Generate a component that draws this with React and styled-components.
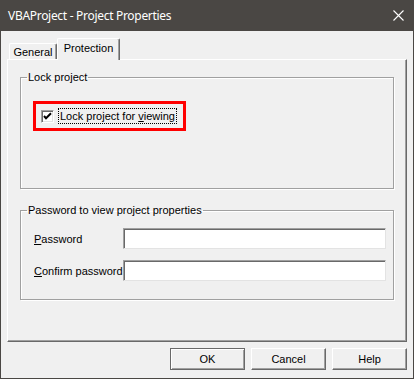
import React from 'react';
import styled, { createGlobalStyle } from 'styled-components';

const GlobalStyle = createGlobalStyle`
  html, body { margin: 0; padding: 0; background: #ffffff; }
  body { font-family: 'Liberation Sans', Arial, sans-serif; font-size: 11px; color: #000; }
  * { box-sizing: border-box; }
`;

const Window = styled.div`
  width: 414px;
  height: 379px;
  display: flex;
  flex-direction: column;
  background: #f0f0f0;
  border: 1px solid #4a4744;
  border-top: none;
`;

const TitleBar = styled.div`
  height: 31px;
  flex: none;
  display: flex;
  align-items: center;
  justify-content: space-between;
  padding: 0 9px 1px 7px;
  background: #4a4744;
  color: #ffffff;
  font-family: 'Noto Sans', 'Open Sans', sans-serif;
  font-size: 12px;
  letter-spacing: -0.3px;
`;

const CloseIcon = styled.svg`
  width: 11px;
  height: 11px;
  display: block;
`;

const Body = styled.div`
  flex: 1;
  display: flex;
  flex-direction: column;
  padding: 7px 6px 0 6px;
`;

const TabRow = styled.div`
  height: 22px;
  display: flex;
  align-items: flex-end;
  padding-left: 2px;
  margin-bottom: -1px;
  position: relative;
  z-index: 1;
`;

const Tab = styled.div`
  display: flex;
  align-items: center;
  justify-content: center;
  width: ${p => p.$width}px;
  height: ${p => (p.$active ? 22 : 16)}px;
  margin-bottom: ${p => (p.$active ? 0 : 1)}px;
  padding-bottom: ${p => (p.$active ? 3 : 0)}px;
  background: #f0f0f0;
  border-top: 1px solid #ffffff;
  border-left: 1px solid #ffffff;
  border-right: 1px solid #696969;
  border-radius: 2px 2px 0 0;
  box-shadow: inset -1px 0 0 #a0a0a0;
`;

const Panel = styled.div`
  height: 283px;
  flex: none;
  padding: 11px 12px 0 12px;
  border-top: 1px solid #ffffff;
  border-left: 1px solid #ffffff;
  border-right: 1px solid #696969;
  border-bottom: 1px solid #696969;
  box-shadow: inset -1px -1px 0 #a0a0a0;
`;

const Group = styled.fieldset`
  margin: ${p => p.$top}px 0 0 0;
  height: ${p => p.$height}px;
  padding: ${p => p.$padTop}px 6px 0 12px;
  min-inline-size: 0;
  border: 1px solid #a0a0a0;
  box-shadow: 1px 1px 0 #ffffff, inset 1px 1px 0 #ffffff;
`;

const Legend = styled.legend`
  margin-left: -6px;
  padding: 0 1px;
  line-height: 13px;
  font-size: 11px;
`;

const Highlight = styled.div`
  display: inline-flex;
  align-items: center;
  height: 30px;
  padding: 0 6px 0 5px;
  border: 3px solid #ff0000;
`;

const CheckBox = styled.span`
  width: 13px;
  height: 13px;
  flex: none;
  display: flex;
  align-items: center;
  justify-content: center;
  background: #ffffff;
  border: 1px solid;
  border-color: #a0a0a0 #ffffff #ffffff #a0a0a0;
  box-shadow: inset 1px 1px 0 #696969, inset -1px -1px 0 #e3e3e3;
`;

const FocusLabel = styled.span`
  margin-left: 4px;
  height: 16px;
  padding: 0 1px;
  display: flex;
  align-items: center;
  border: 1px dotted #000000;
`;

const Key = styled.span`
  text-decoration: underline;
`;

const FieldRow = styled.div`
  display: flex;
  align-items: center;
  & + & { margin-top: 11px; }
`;

const FieldLabel = styled.span`
  width: 90px;
  flex: none;
  padding-left: 1px;
`;

const TextBox = styled.div`
  width: 263px;
  height: 21px;
  flex: none;
  background: #ffffff;
  border: 1px solid;
  border-color: #a0a0a0 #e3e3e3 #e3e3e3 #a0a0a0;
  box-shadow: inset 1px 1px 0 #696969;
`;

const ButtonRow = styled.div`
  display: flex;
  justify-content: flex-end;
  gap: 6px;
  margin-top: 6px;
`;

const Button = styled.div`
  width: 75px;
  height: 22px;
  display: flex;
  align-items: center;
  justify-content: center;
  background: #f0f0f0;
  border: 1px solid;
  border-color: ${p => (p.$default ? '#696969' : '#ffffff #696969 #696969 #ffffff')};
  box-shadow: ${p => (p.$default
    ? 'inset 1px 1px 0 #ffffff, inset -1px -1px 0 #a0a0a0'
    : 'inset -1px -1px 0 #a0a0a0')};
  font-size: 11px;
`;

export default function App() {
  return (
    <>
      <GlobalStyle />
      <Window>
        <TitleBar>
          <span>VBAProject - Project Properties</span>
          <CloseIcon viewBox="0 0 11 11">
            <path d="M0.5 0.5 L10.5 10.5 M10.5 0.5 L0.5 10.5" stroke="#ffffff" strokeWidth="1.1" fill="none" />
          </CloseIcon>
        </TitleBar>
        <Body>
          <TabRow>
            <Tab $width={48}>General</Tab>
            <Tab $width={63} $active>Protection</Tab>
          </TabRow>
          <Panel>
            <Group $top={0} $height={118} $padTop={17}>
              <Legend>Lock project</Legend>
              <Highlight>
                <CheckBox>
                  <svg width="9" height="9" viewBox="0 0 9 9">
                    <path d="M1 4 L3 6.2 L8 1.2" stroke="#000" strokeWidth="2" fill="none" />
                  </svg>
                </CheckBox>
                <FocusLabel>Lock project for&nbsp;<Key>v</Key>iewing</FocusLabel>
              </Highlight>
            </Group>
            <Group $top={15} $height={96} $padTop={11}>
              <Legend>Password to view project properties</Legend>
              <FieldRow>
                <FieldLabel><Key>P</Key>assword</FieldLabel>
                <TextBox />
              </FieldRow>
              <FieldRow>
                <FieldLabel><Key>C</Key>onfirm password</FieldLabel>
                <TextBox />
              </FieldRow>
            </Group>
          </Panel>
          <ButtonRow>
            <Button $default>OK</Button>
            <Button>Cancel</Button>
            <Button>Help</Button>
          </ButtonRow>
        </Body>
      </Window>
    </>
  );
}
